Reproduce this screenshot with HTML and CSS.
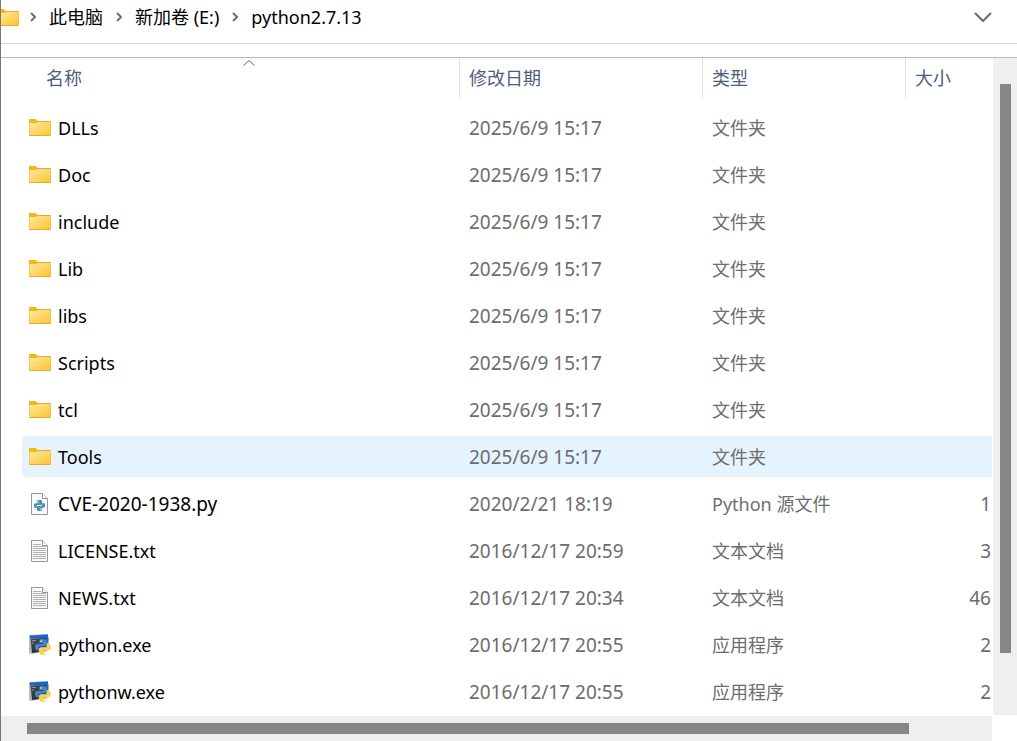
FILE: index.html
```html
<!DOCTYPE html>
<html lang="zh-CN">
<head>
<meta charset="utf-8">
<title>python2.7.13</title>
<link rel="stylesheet" href="styles.css">
</head>
<body>
<svg class="defs" aria-hidden="true">
  <defs>
    <linearGradient id="gold" x1="0" y1="0" x2="1" y2="1"><stop offset="0" stop-color="#ffe8a2"/><stop offset="1" stop-color="#fdc62f"/></linearGradient>
    <linearGradient id="screen" x1="0" y1="0" x2="1" y2="1"><stop offset="0" stop-color="#50565e"/><stop offset="1" stop-color="#10151d"/></linearGradient>
    <symbol id="folder" viewBox="0 0 22 17">
      <path d="M0 .8Q0 0 .8 0H6.700L8.300 2H21.200Q22 2 22 2.800V16Q22 17 21.200 17H.8Q0 17 0 16Z" fill="#e9a92b"/>
      <path d="M0 .8Q0 0 .8 0H6.700L8.300 2L7 4H0Z" fill="#f8b70f"/>
      <path d="M.4 4H7L8.300 3H21.600V16H.4Z" fill="url(#gold)"/>
    </symbol>
    <symbol id="snake" viewBox="0 0 16 16">
      <path d="M7.900 0C4.500 0 4.300 1 4.300 2V4H8.200V4.700H2.400C.8 4.700 0 6 0 8S.8 11.500 2.200 11.500H3.800V9.500C3.800 8.300 4.700 7.400 6 7.400H9.800C11 7.400 11.800 6.600 11.800 5.600V2C11.800.7 10.500 0 7.900 0Z"/>
      <circle cx="6" cy="2" r=".8" fill="#fff"/>
    </symbol>
    <symbol id="py" viewBox="0 0 17 22">
      <path d="M.5.5H11.500L16.500 5.500V21.500H.5Z" fill="#fafafa" stroke="#979797"/>
      <path d="M11.500.5V5.500H16.500" fill="#fff" stroke="#979797"/>
      <g fill="#438eae"><use href="#snake" x="3" y="7" width="11" height="11"/><use href="#snake" x="3" y="7" width="11" height="11" transform="rotate(180 8.500 12.500)"/></g>
    </symbol>
    <symbol id="txt" viewBox="0 0 17 22">
      <path d="M.5.5H11.500L16.500 5.500V21.500H.5Z" fill="#fafafa" stroke="#979797"/>
      <path d="M11.500.5V5.500H16.500" fill="#fff" stroke="#979797"/>
      <path d="M2 4.500H10M2 6.500H15M2 8.500H15M2 10.500H15M2 12.500H15M2 14.500H15M2 16.500H15M2 18.500H15" stroke="#b0b0b0"/>
    </symbol>
    <symbol id="exe" viewBox="0 0 22 22">
      <path d="M0 1L19 0V17L2 20L0 19Z" fill="#b4bac3"/>
      <path d="M1 1.500L19 .5V4L1 4.500Z" fill="#1767d2"/>
      <path d="M17.500 3.500L19.500 3V15L17.500 16Z" fill="#1767d2"/>
      <path d="M1.500 4.500L17.500 4V17L3 19Z" fill="url(#screen)"/>
      <path d="M3 6.500H7M3 9H5" stroke="#8b929b"/>
      <use href="#snake" x="6" y="5" width="16" height="16" fill="#4586be"/>
      <g stroke="#fff" stroke-width=".5"><use href="#snake" x="6" y="5" width="16" height="16" fill="#fdcf45" transform="rotate(180 14 13)"/></g>
    </symbol>
  </defs>
</svg>

<header class="address">
  <svg class="icon folder address-icon"><use href="#folder"/></svg>
  <nav class="crumbs" aria-label="路径">
    <svg class="sep" viewBox="0 0 6 10"><path d="M1 1L5 5L1 9"/></svg>
    <a href="#pc">此电脑</a>
    <svg class="sep" viewBox="0 0 6 10"><path d="M1 1L5 5L1 9"/></svg>
    <a href="#e">新加卷 (E:)</a>
    <svg class="sep" viewBox="0 0 6 10"><path d="M1 1L5 5L1 9"/></svg>
    <a href="#python">python2.7.13</a>
  </nav>
  <button class="history" type="button" aria-label="以前的位置"><svg viewBox="0 0 18 10"><path d="M1 1L9 9L17 1"/></svg></button>
</header>

<main class="pane">
  <div class="files">
    <table>
      <colgroup><col class="c-name"><col class="c-date"><col class="c-type"><col></colgroup>
      <thead>
        <tr>
          <th class="first" aria-sort="ascending"><button type="button">名称<svg class="sort" viewBox="0 0 12 6"><path d="M.5 5.500L6 .5L11.500 5.500"/></svg></button></th>
          <th><button type="button">修改日期</button></th>
          <th><button type="button">类型</button></th>
          <th><button type="button">大小</button></th>
        </tr>
      </thead>
      <tbody>
        <tr><td><div class="name"><svg class="icon folder"><use href="#folder"/></svg>DLLs</div></td><td class="date">2025/6/9 15:17</td><td>文件夹</td><td></td></tr>
        <tr><td><div class="name"><svg class="icon folder"><use href="#folder"/></svg>Doc</div></td><td class="date">2025/6/9 15:17</td><td>文件夹</td><td></td></tr>
        <tr><td><div class="name"><svg class="icon folder"><use href="#folder"/></svg>include</div></td><td class="date">2025/6/9 15:17</td><td>文件夹</td><td></td></tr>
        <tr><td><div class="name"><svg class="icon folder"><use href="#folder"/></svg>Lib</div></td><td class="date">2025/6/9 15:17</td><td>文件夹</td><td></td></tr>
        <tr><td><div class="name"><svg class="icon folder"><use href="#folder"/></svg>libs</div></td><td class="date">2025/6/9 15:17</td><td>文件夹</td><td></td></tr>
        <tr><td><div class="name"><svg class="icon folder"><use href="#folder"/></svg>Scripts</div></td><td class="date">2025/6/9 15:17</td><td>文件夹</td><td></td></tr>
        <tr><td><div class="name"><svg class="icon folder"><use href="#folder"/></svg>tcl</div></td><td class="date">2025/6/9 15:17</td><td>文件夹</td><td></td></tr>
        <tr class="active"><td><div class="name"><svg class="icon folder"><use href="#folder"/></svg>Tools</div></td><td class="date">2025/6/9 15:17</td><td>文件夹</td><td></td></tr>
        <tr><td><div class="name wide"><svg class="icon sheet"><use href="#py"/></svg>CVE-2020-1938.py</div></td><td class="date">2020/2/21 18:19</td><td>Python 源文件</td><td class="size">1</td></tr>
        <tr><td><div class="name"><svg class="icon sheet"><use href="#txt"/></svg>LICENSE.txt</div></td><td class="date">2016/12/17 20:59</td><td>文本文档</td><td class="size">3</td></tr>
        <tr><td><div class="name"><svg class="icon sheet"><use href="#txt"/></svg>NEWS.txt</div></td><td class="date">2016/12/17 20:34</td><td>文本文档</td><td class="size">46</td></tr>
        <tr><td><div class="name"><svg class="icon exe"><use href="#exe"/></svg>python.exe</div></td><td class="date">2016/12/17 20:55</td><td>应用程序</td><td class="size">2</td></tr>
        <tr><td><div class="name"><svg class="icon exe"><use href="#exe"/></svg>pythonw.exe</div></td><td class="date">2016/12/17 20:55</td><td>应用程序</td><td class="size">2</td></tr>
      </tbody>
    </table>
  </div>
  <div class="track vertical"><div class="thumb"></div></div>
  <div class="track horizontal"><div class="thumb"></div></div>
</main>
</body>
</html>
```

FILE: styles.css
```css
* { box-sizing: border-box; }

body {
  margin: 0;
  height: 100vh;
  display: flex;
  flex-direction: column;
  overflow: hidden;
  border-left: 1px solid #777;
  background: #fff;
  color: #000;
  font: 18px/24px "Noto Sans", "Noto Sans CJK SC", sans-serif;
}

.defs { position: absolute; width: 0; height: 0; }

svg { display: block; flex: none; }

button {
  margin: 0;
  padding: 0;
  border: 0;
  background: none;
  color: inherit;
  font: inherit;
}

.address {
  flex: none;
  display: flex;
  align-items: center;
  height: 44px;
  padding: 0 25px 9px 0;
  border-bottom: 1px solid #d9d9d9;
}

.address-icon { margin-left: -4px; }

.crumbs {
  flex: 1;
  display: flex;
  align-items: center;
  gap: 13px;
  padding-left: 11px;
}

.crumbs a { color: #000; text-decoration: none; }

.sep { width: 6px; height: 10px; fill: none; stroke: #707070; stroke-width: 2; }

.history svg { width: 18px; height: 10px; fill: none; stroke: #6a6a6a; stroke-width: 2; }

.pane {
  flex: 1;
  min-height: 0;
  display: grid;
  grid-template: minmax(0, 1fr) 26px / minmax(0, 1fr) 25px;
  margin-top: 13px;
  border-top: 1px solid #b9b9b9;
}

.files { overflow: hidden; padding-left: 21px; }

table {
  width: 100%;
  table-layout: fixed;
  border-collapse: separate;
  border-spacing: 0;
}

.c-name { width: 437px; }
.c-date { width: 243px; }
.c-type { width: 203px; }

th { padding: 0 0 6px; font-weight: 400; }
th.first { padding-left: 16px; }

th button {
  position: relative;
  display: block;
  width: 100%;
  height: 40px;
  padding-left: 9px;
  border-left: 1px solid #e2e2e2;
  color: #4c607a;
  text-align: left;
}

th.first button { padding-left: 8px; border-left: 0; }

.sort {
  position: absolute;
  top: 2px;
  left: 50%;
  width: 12px;
  height: 6px;
  margin-left: -6px;
  fill: none;
  stroke: #666;
}

td {
  height: 47px;
  padding: 0 0 0 10px;
  border: solid transparent;
  border-width: 3px 0;
  background-clip: padding-box;
  color: #6d6d6d;
  white-space: nowrap;
}

td:first-child { padding-left: 7px; border-radius: 5px 0 0 5px; }

.active td { background-color: #e5f3ff; }

.name { display: flex; align-items: center; gap: 7px; color: #000; }
.date, .wide, .size { font-size: 19px; }
.size { padding-right: 1px; text-align: right; }

.icon { width: 22px; height: 22px; }
.folder { height: 17px; }
.sheet { width: 17px; margin: 0 3px 0 2px; }

.track { display: flex; background: #efefef; }
.thumb { flex: 1; background: #868686; }
.vertical { margin-left: 1px; padding: 26px 6px 62px 7px; }
.horizontal { margin-top: 1px; padding: 7px 83px 7px 26px; }
```
